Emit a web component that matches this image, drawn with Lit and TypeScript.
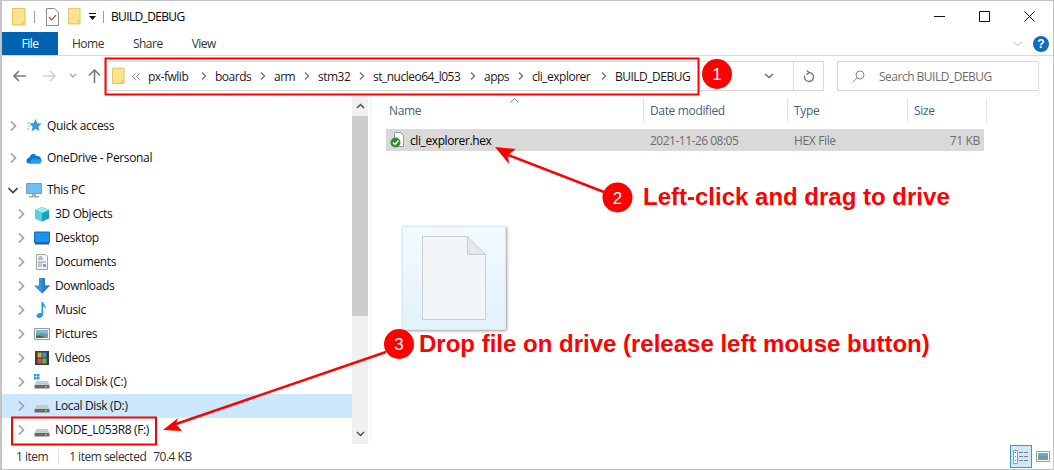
import { LitElement, html, css, svg } from 'lit';
import { customElement } from 'lit/decorators.js';

// small icon helpers, all drawn on a 16px box unless the viewBox says otherwise
const folder = (w = 14, h = 18) => html`<svg width=${w} height=${h} viewBox="0 0 14 18">
  <path d="M.5 .5h12.5v16.5H.5z" fill="#fbe28f" stroke="#e5c25b"/>
  <path d="M10 13h3v4h-3z" fill="#f3cf63"/>
</svg>`;

const chevron = (open = false) => html`<svg class="chev" width="10" height="10" viewBox="0 0 10 10">
  ${open
    ? svg`<path d="M.5 3l4.500 4.500L9.500 3" fill="none" stroke="#404040" stroke-width="1.6"/>`
    : svg`<path d="M3 .5L7.500 5 3 9.500" fill="none" stroke="#a0a0a0" stroke-width="1.6"/>`}
</svg>`;

const crumbSep = html`<svg class="sep" width="6" height="8" viewBox="0 0 6 8"><path d="M1 .5l3.5 3.5L1 7.5" fill="none" stroke="#7a7a7a" stroke-width="1.5"/></svg>`;

const drive = (win = false) => html`<svg width="16" height="16" viewBox="0 0 16 16">
  ${win ? svg`<path d="M0 0h2.5v2.5H0zM3 0h2.5v2.5H3zM0 3h2.5v2.5H0zM3 3h2.5v2.5H3z" fill="#1ba1e2"/>` : ''}
  <path d="M2.5 7h11l2 4H.5z" fill="#c9c9c9"/>
  <path d="M.5 11h15v3.5H.5z" fill="#6a6a6a"/>
  <path d="M11 12h2v1.5h-2z" fill="#5fd35f"/>
</svg>`;

const icons: Record<string, unknown> = {
  star: html`<svg width="16" height="16" viewBox="0 0 16 16">
    <path d="M9.5 1l1.800 4.200 4.500.4-3.400 3 1 4.500-3.900-2.400L5.600 13.500l1-5-3.300-3 4.400-.4z" fill="#2f9be8"/>
    <path d="M1 5h3M2 8h2.500M1 11h3" stroke="#8cc9f3"/>
  </svg>`,
  cloud: html`<svg width="16" height="16" viewBox="0 0 16 16">
    <path d="M3.5 7.5C4 4 8.500 2.500 10.500 6 13 5.500 15.500 7.500 15.500 10.500 15.500 12.500 14 13.500 12.500 13.500H3C1 13.500 .5 12 .5 11 .5 9 2 7.500 3.500 7.500z" fill="#0f78d4"/>
    <path d="M6 9.500C8 8 10 8 11.500 9.500 13 9 15 9.500 15.500 10.500 15.500 12.500 14 13.500 12.500 13.500H4.500C4 11.500 5 10 6 9.500z" fill="#2a9be8"/>
  </svg>`,
  pc: html`<svg width="16" height="16" viewBox="0 0 16 16">
    <path d="M.5 1.500h15v10H.5z" fill="#6cc0f7" stroke="#8c9aa6"/>
    <path d="M6 12h4v2H6z" fill="#a9b4bd"/><path d="M3 14h10v1.500H3z" fill="#9aa6b0"/>
  </svg>`,
  cube: html`<svg width="16" height="16" viewBox="0 0 16 16">
    <path d="M8 1l7 3v8.500L8 15.500 1 12.500V4z" fill="#13a4b8"/>
    <path d="M8 1l7 3-7 3-7-3z" fill="#9fe9ef"/>
    <path d="M1 4l7 3v8.500l-7-3z" fill="#58d2dd"/>
  </svg>`,
  desktop: html`<svg width="16" height="16" viewBox="0 0 16 16">
    <path d="M.5 2h15v10.500H.5z" fill="#1e91ea" stroke="#0d6fbd"/>
    <path d="M1 13h14v1.500H1z" fill="#4a5560"/>
  </svg>`,
  docs: html`<svg width="16" height="16" viewBox="0 0 16 16">
    <path d="M2.500 .5h9l2 2v13h-11z" fill="#f4f4f4" stroke="#a3a3a3"/>
    <path d="M5 3h3M4 5h5" stroke="#3a96dd"/>
    <path d="M4 8h8M4 10h4M4 12h4" stroke="#8a9aa8"/>
    <path d="M9 10h3v3H9z" fill="#6aa6cf"/>
  </svg>`,
  down: html`<svg width="16" height="16" viewBox="0 0 16 16">
    <path d="M5 0h6v7.500h5L8 15.500 0 7.500h5z" fill="#3a8fdc"/>
    <path d="M8 0h3v7.500h5L8 15.500z" fill="#2d7cc6"/>
  </svg>`,
  music: html`<svg width="16" height="16" viewBox="0 0 16 16">
    <path d="M7.500 0h1.500c.3 3 3.500 3.500 3 7-.5-1.500-1.500-2.500-3-3v8.500C9 14.500 7 16 5 16s-2.500-1.200-2.500-2.200C2.500 12 5 10.500 7.500 11.200z" fill="#1e9be8"/>
  </svg>`,
  pics: html`<svg width="16" height="16" viewBox="0 0 16 16">
    <path d="M.5 2.500h15v11H.5z" fill="#f7f7f7" stroke="#9a9a9a"/>
    <path d="M2 4h12v4H2z" fill="#7cb9e8"/>
    <path d="M2 8c3-1.500 6-1 12 0v4H2z" fill="#7d9c86"/>
    <path d="M2 10c3-1 6-1 9 2H2z" fill="#486a55"/>
  </svg>`,
  videos: html`<svg width="16" height="16" viewBox="0 0 16 16">
    <path d="M1 1h14v14H1z" fill="#3b3b3b"/>
    <path d="M3.500 2.500h4.200v5H3.500z" fill="#e0a030"/>
    <path d="M8.300 2.500h4.200v5H8.300z" fill="#3a8fdc"/>
    <path d="M3.500 8.500h4.200v5H3.500z" fill="#d0553f"/>
    <path d="M8.300 8.500h4.200v5H8.300z" fill="#6fb04a"/>
  </svg>`,
  disk: drive(),
  diskc: drive(true),
};

type TreeRow = { label: string; icon: string; level: number; open?: boolean; selected?: boolean; groupEnd?: boolean };

const tree: TreeRow[] = [
  { label: 'Quick access', icon: 'star', level: 0, groupEnd: true },
  { label: 'OneDrive - Personal', icon: 'cloud', level: 0, groupEnd: true },
  { label: 'This PC', icon: 'pc', level: 0, open: true },
  { label: '3D Objects', icon: 'cube', level: 1 },
  { label: 'Desktop', icon: 'desktop', level: 1 },
  { label: 'Documents', icon: 'docs', level: 1 },
  { label: 'Downloads', icon: 'down', level: 1 },
  { label: 'Music', icon: 'music', level: 1 },
  { label: 'Pictures', icon: 'pics', level: 1 },
  { label: 'Videos', icon: 'videos', level: 1 },
  { label: 'Local Disk (C:)', icon: 'diskc', level: 1 },
  { label: 'Local Disk (D:)', icon: 'disk', level: 1, selected: true },
  { label: 'NODE_L053R8 (F:)', icon: 'disk', level: 1 },
];

// width is the advance up to the next crumb, the font is not the one of the shot
const crumbs = [
  { label: 'px-fwlib', width: 67 },
  { label: 'boards', width: 59 },
  { label: 'arm', width: 44 },
  { label: 'stm32', width: 55 },
  { label: 'st_nucleo64_l053', width: 111 },
  { label: 'apps', width: 48 },
  { label: 'cli_explorer', width: 83 },
  { label: 'BUILD_DEBUG', width: 0 },
];

@customElement('app-root')
export class AppRoot extends LitElement {
  static styles = css`
    :host {
      display: block;
      width: 1054px;
      height: 470px;
      overflow: hidden;
      font-family: 'Open Sans', 'Noto Sans', sans-serif;
      font-size: 12px;
      letter-spacing: -0.35px;
      color: #1a1a1a;
    }
    .window {
      position: relative;
      box-sizing: border-box;
      width: 1054px;
      height: 470px;
      display: flex;
      flex-direction: column;
      background: #fff;
      border: solid #c4c4c4;
      border-width: 1px 1px 1px 2px;
    }
    svg { display: block; flex: none; }

    .title {
      flex: 0 0 31px;
      display: flex;
      align-items: center;
      padding-left: 10px;
    }
    .title .vline { width: 1px; height: 12px; background: #a0a0a0; }
    .title .name { margin-left: 7px; color: #000; letter-spacing: -0.65px; }
    .win-btns { margin-left: auto; display: flex; align-items: center; gap: 34px; padding-right: 18px; }

    .tabs {
      flex: 0 0 23px;
      display: flex;
      align-items: center;
      border-bottom: 1px solid #dadada;
    }
    .tab { color: #333; letter-spacing: -0.5px; line-height: 22px; }
    .tab.file {
      width: 56px;
      height: 100%;
      background: #0063b1;
      color: #fff;
      display: flex;
      align-items: center;
      justify-content: center;
    }
    .tab.home { margin-left: 14px; }
    .tab.share { margin-left: 29px; }
    .tab.view { margin-left: 29px; }
    .ribbon-right { margin-left: auto; display: flex; align-items: center; gap: 11px; padding-right: 4px; }
    .help {
      width: 16px;
      height: 16px;
      border-radius: 50%;
      background: #0f6cbd;
      color: #fff;
      font: bold 12px 'Liberation Sans', sans-serif;
      letter-spacing: 0;
      display: flex;
      align-items: center;
      justify-content: center;
    }

    .nav {
      flex: 0 0 40px;
      display: flex;
      align-items: flex-start;
      padding-top: 5px;
      box-sizing: border-box;
    }
    .nav-btns {
      flex: 0 0 104px;
      height: 29px;
      display: flex;
      align-items: center;
      padding-left: 11px;
      box-sizing: border-box;
    }
    .address {
      flex: 0 0 718px;
      box-sizing: border-box;
      height: 30px;
      border: 1px solid #d9d9d9;
      display: flex;
      align-items: center;
      padding-left: 5px;
    }
    .crumbs { display: flex; align-items: center; color: #1a1a1a; letter-spacing: -0.5px; }
    .crumb { display: flex; align-items: center; justify-content: space-between; white-space: nowrap; }
    .crumb .sep { margin-right: 8px; }
    .addr-end { margin-left: auto; display: flex; align-items: center; height: 100%; }
    .addr-end .drop { padding-right: 10px; }
    .addr-end .refresh {
      height: 100%;
      width: 29px;
      border-left: 1px solid #d9d9d9;
      display: flex;
      align-items: center;
      justify-content: center;
    }
    .search {
      margin-left: 13px;
      flex: 0 0 202px;
      box-sizing: border-box;
      height: 30px;
      border: 1px solid #d9d9d9;
      display: flex;
      align-items: center;
      gap: 14px;
      padding-left: 14px;
      color: #6d6d6d;
      letter-spacing: -0.5px;
    }

    .main { flex: 1; display: flex; min-height: 0; }
    .sidebar { flex: 0 0 350px; padding-top: 18px; box-sizing: border-box; }
    .row { height: 24px; display: flex; align-items: center; color: #111; }
    .row.group-end { margin-bottom: 8px; }
    .row.selected { background: #cce8ff; }
    .row .chev { margin-right: 8px; }
    .row .label { margin-left: 5px; padding-bottom: 2px; white-space: nowrap; }
    .row.l0 { padding-left: 6px; }
    .row.l1 { padding-left: 14px; }

    .scrollbar {
      flex: 0 0 16px;
      background: #f0f0f0;
      display: flex;
      flex-direction: column;
    }
    .scrollbar .end { flex: 0 0 20px; display: flex; align-items: center; justify-content: center; }
    .scrollbar .thumb { flex: 0 0 200px; background: #cdcdcd; }
    .scrollbar .rest { flex: 1; }
    .splitter { flex: 0 0 2px; background: #fff; border-right: 1px solid #f0f0f0; }

    .content { flex: 1; position: relative; padding-left: 15px; }
    .cols { display: grid; grid-template-columns: 257px 144px 120px 77px; width: 598px; }
    .head { height: 28px; color: #4c607a; margin-bottom: 5px; }
    .head > div { display: flex; align-items: center; padding-left: 6px; border-left: 1px solid #e5e5e5; margin: 2px 0 1px; position: relative; }
    .head > div:first-child { border-left: 0; padding-left: 3px; }
    .head > div:last-child { border-right: 1px solid #e5e5e5; margin-right: -3px; }
    .sort { position: absolute; left: 124px; top: 0; }
    .file { height: 22px; background: #d9d9d9; align-items: center; color: #000; }
    .file .name { display: flex; align-items: center; gap: 4px; padding-left: 4px; letter-spacing: -0.4px; }
    .file .dim { padding-left: 7px; color: #6d6d6d; }
    .file .date { letter-spacing: -0.5px; }
    .file .size { text-align: right; padding-right: 4px; }

    .ghost {
      position: absolute;
      left: 31px;
      top: 130px;
      width: 104px;
      height: 104px;
      box-sizing: border-box;
      border: 1px solid #d6ebf7;
      border-radius: 2px;
      background: linear-gradient(#f3fafe, #e2f2fb);
      box-shadow: 1px 1px 3px rgba(0, 0, 0, 0.4);
      display: flex;
      justify-content: center;
      padding-top: 9px;
    }

    .status {
      flex: 0 0 25px;
      display: flex;
      align-items: center;
      padding-left: 14px;
      color: #333;
      letter-spacing: -0.5px;
    }
    .status .gap { width: 1px; height: 16px; background: #e5e5e5; margin: 0 10px; }
    .status .one { margin-right: 7px; }
    .views { margin-left: auto; display: flex; align-items: center; gap: 4px; padding-right: 3px; }
    .views .on {
      box-sizing: border-box;
      width: 22px;
      height: 23px;
      border: 1px solid #3399d5;
      background: #cce8ff;
      display: flex;
      align-items: center;
      justify-content: center;
    }

    .notes { position: absolute; left: -2px; top: -1px; pointer-events: none; }
    .notes text { font-family: 'Liberation Sans', Arial, sans-serif; letter-spacing: 0; }
    .notes .big { font-size: 24px; font-weight: 700; fill: #ff0000; }
    .notes .num { font-size: 17px; fill: #fff; text-anchor: middle; }
  `;

  private renderRow(r: TreeRow) {
    const cls = `row l${r.level}${r.selected ? ' selected' : ''}${r.groupEnd ? ' group-end' : ''}`;
    return html`<div class=${cls}>
      ${chevron(r.open)}
      ${icons[r.icon]}
      <span class="label">${r.label}</span>
    </div>`;
  }

  private renderTitle() {
    return html`<div class="title">
      ${folder()}
      <span class="vline" style="margin:0 11px 0 8px"></span>
      <svg width="13" height="18" viewBox="0 0 13 18">
        <path d="M.5 .5h8l4 4v13H.5z" fill="#fff" stroke="#8a8a8a"/>
        <path d="M3 9l2.500 3 4.500-5" fill="none" stroke="#d9572b" stroke-width="1.300"/>
      </svg>
      <span style="width:9px"></span>
      ${folder(13, 17)}
      <svg style="margin:0 6px 0 7px" width="9" height="8" viewBox="0 0 9 8"><path d="M1 0h7v1H1zM1 3h7L4.500 7z" fill="#111"/></svg>
      <span class="vline"></span>
      <span class="name">BUILD_DEBUG</span>
      <div class="win-btns">
        <svg width="11" height="11" viewBox="0 0 11 11"><path d="M0 5.500h11" stroke="#111"/></svg>
        <svg width="11" height="11" viewBox="0 0 11 11"><path d="M.5 .5h10v10H.5z" fill="none" stroke="#111"/></svg>
        <svg width="11" height="11" viewBox="0 0 11 11"><path d="M.5 .5l10 10M10.500 .5l-10 10" stroke="#111"/></svg>
      </div>
    </div>`;
  }

  private renderNav() {
    return html`<div class="nav">
      <div class="nav-btns">
        <svg width="13" height="12" viewBox="0 0 13 12"><path d="M6 1L1 6l5 5M1 6h12" fill="none" stroke="#7a7a7a" stroke-width="1.600"/></svg>
        <svg style="margin-left:17px" width="13" height="12" viewBox="0 0 13 12"><path d="M7 1l5 5-5 5M12 6H0" fill="none" stroke="#d2d2d2" stroke-width="1.600"/></svg>
        <svg style="margin-left:13px" width="8" height="6" viewBox="0 0 8 6"><path d="M1 1l3 3 3-3" fill="none" stroke="#a6a6a6" stroke-width="1.300"/></svg>
        <svg style="margin-left:11px" width="13" height="14" viewBox="0 0 13 14"><path d="M1 6.500l5.500-5.500L12 6.500M6.500 1v13" fill="none" stroke="#7a7a7a" stroke-width="1.600"/></svg>
      </div>
      <div class="address">
        ${folder(13, 18)}
        <svg style="margin:0 8px 0 7px" width="8" height="7" viewBox="0 0 8 7"><path d="M3.500 .5L.8 3.500l2.700 3M7.500 .5L4.800 3.500l2.700 3" fill="none" stroke="#7a7a7a"/></svg>
        <div class="crumbs">
          ${crumbs.map((c) => c.width
            ? html`<div class="crumb" style="width:${c.width}px"><span>${c.label}</span>${crumbSep}</div>`
            : html`<div class="crumb"><span>${c.label}</span></div>`)}
        </div>
        <div class="addr-end">
          <svg class="drop" width="19" height="6" viewBox="0 0 19 6"><path d="M1 1l4 3.500L9 1" fill="none" stroke="#6d6d6d" stroke-width="1.500"/></svg>
          <div class="refresh">
            <svg width="12" height="13" viewBox="0 0 12 13"><path d="M6 2.500a4.500 4.500 0 1 1-4.300 3.200M3.500 .5l2.700 2-2.700 2.200" fill="none" stroke="#7a7a7a" stroke-width="1.400"/></svg>
          </div>
        </div>
      </div>
      <div class="search">
        <svg width="13" height="13" viewBox="0 0 13 13"><circle cx="8" cy="5" r="4" fill="none" stroke="#8a8a8a"/><path d="M5 8l-4.500 4.500" stroke="#c08a5a"/></svg>
        <span>Search BUILD_DEBUG</span>
      </div>
    </div>`;
  }

  private renderNotes() {
    return html`<svg class="notes" width="1054" height="470" viewBox="0 0 1054 470">
      <rect x="105.500" y="58.500" width="593" height="36" fill="none" stroke="#ff0000" stroke-width="2"/>
      <rect x="12" y="417.500" width="144" height="27" fill="none" stroke="#ff0000" stroke-width="2"/>

      <path d="M604 192L508 155" stroke="#ff0000" stroke-width="2.500"/>
      <path d="M495 147L516 149 508 155 509 164z" fill="#ff0000"/>
      <path d="M386 352L176 424" stroke="#ff0000" stroke-width="2.500"/>
      <path d="M163 430L178 418 176 424 182 431z" fill="#ff0000"/>

      <circle cx="717" cy="74" r="15" fill="#ff0000"/>
      <text class="num" x="717" y="80">1</text>
      <circle cx="617.500" cy="197.500" r="15" fill="#ff0000"/>
      <text class="num" x="617.500" y="203.500">2</text>
      <circle cx="399" cy="344" r="15" fill="#ff0000"/>
      <text class="num" x="399" y="350">3</text>

      <text class="big" x="643" y="205">Left-click and drag to drive</text>
      <text class="big" x="419" y="352">Drop file on drive (release left mouse button)</text>
    </svg>`;
  }

  render() {
    return html`<div class="window">
      ${this.renderTitle()}
      <div class="tabs">
        <div class="tab file">File</div>
        <div class="tab home">Home</div>
        <div class="tab share">Share</div>
        <div class="tab view">View</div>
        <div class="ribbon-right">
          <svg width="9" height="6" viewBox="0 0 9 6"><path d="M.5 1l4 3.500 4-3.500" fill="none" stroke="#b5b5b5"/></svg>
          <div class="help">?</div>
        </div>
      </div>
      ${this.renderNav()}
      <div class="main">
        <div class="sidebar">${tree.map((r) => this.renderRow(r))}</div>
        <div class="scrollbar">
          <div class="end"><svg width="9" height="6" viewBox="0 0 9 6"><path d="M1 5l3.500-3.500L8 5" fill="none" stroke="#505050" stroke-width="1.500"/></svg></div>
          <div class="thumb"></div>
          <div class="rest"></div>
          <div class="end"><svg width="9" height="6" viewBox="0 0 9 6"><path d="M1 1l3.500 3.500L8 1" fill="none" stroke="#505050" stroke-width="1.500"/></svg></div>
        </div>
        <div class="splitter"></div>
        <div class="content">
          <div class="cols head">
            <div>Name
              <svg class="sort" width="9" height="5" viewBox="0 0 9 5"><path d="M.5 4.500l4-4 4 4" fill="none" stroke="#8a8a8a"/></svg>
            </div>
            <div>Date modified</div>
            <div>Type</div>
            <div>Size</div>
          </div>
          <div class="cols file">
            <div class="name">
              <svg width="16" height="16" viewBox="0 0 16 16">
                <path d="M4.500 .5h6l3 3v11h-9z" fill="#fff" stroke="#9a9a9a"/>
                <circle cx="5.500" cy="10.500" r="5" fill="#2f8f2f"/>
                <path d="M3 10.500l2 2 3.500-4" fill="none" stroke="#fff" stroke-width="1.500"/>
              </svg>
              <span>cli_explorer.hex</span>
            </div>
            <div class="dim date">2021-11-26 08:05</div>
            <div class="dim">HEX File</div>
            <div class="dim size">71 KB</div>
          </div>
          <div class="ghost">
            <svg width="64" height="84" viewBox="0 0 64 84">
              <path d="M.5 .5h45l18 18v65H.5z" fill="#f3f6f9" stroke="#c9ced2"/>
              <path d="M45.500 .5l18 18h-18z" fill="#e6e7e9" stroke="#c9ced2"/>
            </svg>
          </div>
        </div>
      </div>
      <div class="status">
        <span>1 item</span>
        <span class="gap"></span>
        <span class="one">1 item selected</span>
        <span>70.4 KB</span>
        <div class="views">
          <div class="on">
            <svg width="16" height="14" viewBox="0 0 16 14">
              <path d="M.5 .5h4v13h-4z" fill="#fff" stroke="#9a9a9a"/>
              <path d="M2 2h1v1H2z" fill="#666"/><path d="M2 6h1v1H2z" fill="#3a8fdc"/><path d="M2 10h1v1H2z" fill="#d0553f"/>
              <path d="M6 2.500h4M11 2.500h4M6 6.500h4M11 6.500h4M6 10.500h4M11 10.500h4" stroke="#808080"/>
            </svg>
          </div>
          <svg width="14" height="11" viewBox="0 0 14 11">
            <path d="M.5 .5h13v10H.5z" fill="#fff" stroke="#9a9a9a"/>
            <path d="M2 2h10v3H2z" fill="#5aa9f0"/><path d="M2 5h10v4H2z" fill="#7d9c86"/>
          </svg>
        </div>
      </div>
      ${this.renderNotes()}
    </div>`;
  }
}
